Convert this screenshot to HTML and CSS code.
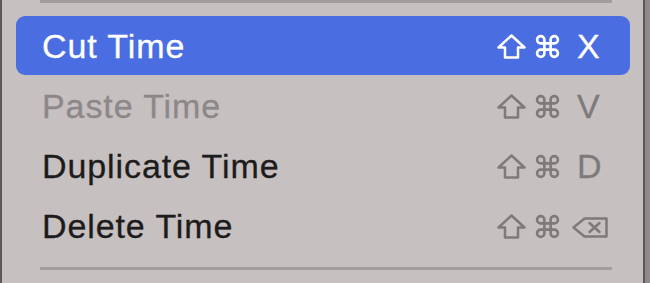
FILE: index.html
```html
<!DOCTYPE html>
<html>
<head>
<meta charset="utf-8">
<link rel="stylesheet" href="styles.css">
</head>
<body>
<div class="frame">
  <div class="menu">
    <div class="sep sep-top"></div>
    <div class="item selected">
      <span class="label">Cut Time</span>
      <span class="keys">
        <svg class="shift" viewBox="0 0 29 25"><path d="M14.5 1.5 L27.5 13.5 H21 V23.5 H8 V13.5 H1.5 Z"/></svg>
        <svg class="cmd" viewBox="0 0 24 24"><path d="M9 9 V5.5 A3.5 3.5 0 1 0 5.5 9 H18.5 A3.5 3.5 0 1 0 15 5.5 V18.5 A3.5 3.5 0 1 0 18.5 15 H5.5 A3.5 3.5 0 1 0 9 18.5 Z"/></svg>
        <span class="key">X</span>
      </span>
    </div>
    <div class="item disabled">
      <span class="label">Paste Time</span>
      <span class="keys">
        <svg class="shift" viewBox="0 0 29 25"><path d="M14.5 1.5 L27.5 13.5 H21 V23.5 H8 V13.5 H1.5 Z"/></svg>
        <svg class="cmd" viewBox="0 0 24 24"><path d="M9 9 V5.5 A3.5 3.5 0 1 0 5.5 9 H18.5 A3.5 3.5 0 1 0 15 5.5 V18.5 A3.5 3.5 0 1 0 18.5 15 H5.5 A3.5 3.5 0 1 0 9 18.5 Z"/></svg>
        <span class="key">V</span>
      </span>
    </div>
    <div class="item">
      <span class="label">Duplicate Time</span>
      <span class="keys">
        <svg class="shift" viewBox="0 0 29 25"><path d="M14.5 1.5 L27.5 13.5 H21 V23.5 H8 V13.5 H1.5 Z"/></svg>
        <svg class="cmd" viewBox="0 0 24 24"><path d="M9 9 V5.5 A3.5 3.5 0 1 0 5.5 9 H18.5 A3.5 3.5 0 1 0 15 5.5 V18.5 A3.5 3.5 0 1 0 18.5 15 H5.5 A3.5 3.5 0 1 0 9 18.5 Z"/></svg>
        <span class="key">D</span>
      </span>
    </div>
    <div class="item">
      <span class="label">Delete Time</span>
      <span class="keys">
        <svg class="shift" viewBox="0 0 29 25"><path d="M14.5 1.5 L27.5 13.5 H21 V23.5 H8 V13.5 H1.5 Z"/></svg>
        <svg class="cmd" viewBox="0 0 24 24"><path d="M9 9 V5.5 A3.5 3.5 0 1 0 5.5 9 H18.5 A3.5 3.5 0 1 0 15 5.5 V18.5 A3.5 3.5 0 1 0 18.5 15 H5.5 A3.5 3.5 0 1 0 9 18.5 Z"/></svg>
        <svg class="del" viewBox="0 0 36 21"><path d="M1.5 10.5 L12.5 1.5 H34.5 V19.5 H12.5 Z"/><path d="M17.5 6 L27.5 15 M27.5 6 L17.5 15"/></svg>
      </span>
    </div>
    <div class="sep sep-bottom"></div>
  </div>
</div>
</body>
</html>
```

FILE: styles.css
```css
html, body {
  margin: 0;
  padding: 0;
  width: 650px;
  height: 283px;
  overflow: hidden;
  background: #8f8b8b;
}

.frame {
  display: flex;
  height: 283px;
}

.menu {
  width: 614px;
  flex-shrink: 0;
  height: 283px;
  background: #c6c0c0;
  border-left: 2px solid #5d5a5a;
  border-right: 2px solid #5a5757;
  display: flex;
  flex-direction: column;
  padding: 0 13px 0 14px;
  box-sizing: content-box;
  font-family: "Liberation Sans", Arial, sans-serif;
  font-size: 34px;
  letter-spacing: 0.9px;
  color: #1d1b1b;
  -webkit-text-stroke: 0.3px currentColor;
}

.sep {
  height: 3px;
  background: #a39e9e;
  margin: 0 18px 0 24px;
}

.sep-top {
  margin-bottom: 13px;
}

.sep-bottom {
  margin-top: 11px;
  height: 3px;
}

.item {
  height: 60px;
  display: flex;
  align-items: center;
  padding: 0 22px 0 26px;
  border-radius: 9px;
}

.item .label {
  flex: 1;
  line-height: 60px;
}

.item.selected {
  background: #4a6ee2;
  color: #ffffff;
  height: 59px;
  margin-bottom: 1px;
}

.item.disabled {
  color: #8c8888;
}

.keys {
  display: flex;
  align-items: center;
  flex-shrink: 0;
  color: #7e7a7a;
}

.selected .keys {
  color: #ffffff;
}

.keys svg {
  flex-shrink: 0;
}

.keys svg path {
  fill: none;
  stroke: currentColor;
  stroke-width: 2.5;
  stroke-linejoin: round;
  stroke-linecap: round;
}

.shift {
  width: 29px;
  height: 25px;
  margin-top: 1px;
}

.cmd {
  width: 25px;
  height: 25px;
  margin-left: 9px;
  margin-top: 1px;
}

.key {
  width: 31px;
  margin-left: 17px;
  line-height: 60px;
  letter-spacing: 0;
}

.del {
  width: 36px;
  height: 21px;
  margin-left: 12px;
  margin-top: 2px;
}
```
